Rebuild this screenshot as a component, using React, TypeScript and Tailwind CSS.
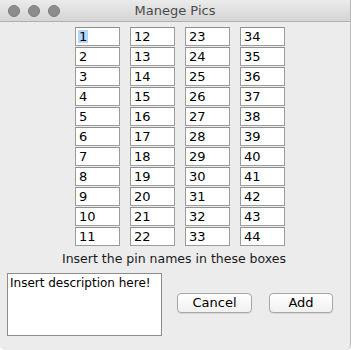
import React from 'react';

const font = { fontFamily: '"DejaVu Sans", "Liberation Sans", sans-serif' };

const PinField: React.FC<{ value: string; selected?: boolean }> = ({ value, selected }) => (
  <div className="h-[19px] w-[45px] bg-white border border-[#9b9b9b] border-t-[#8e8e8e] flex items-center pl-[2px] text-[13px] leading-none text-black">
    {selected ? <span className="bg-[#b3d7ff] px-[1px]">{value}</span> : <span className="px-[1px]">{value}</span>}
  </div>
);

const MacButton: React.FC<{ label: string; width: string }> = ({ label, width }) => (
  <button
    className={`${width} h-[20px] rounded-[4px] border border-[#a6a6a6] bg-gradient-to-b from-white to-[#f1f1f1] text-[13px] leading-none text-black shadow-[0_1px_0_rgba(0,0,0,0.08)] flex items-center justify-center`}
  >
    {label}
  </button>
);

export default function App() {
  const columns = [0, 1, 2, 3].map((c) => Array.from({ length: 11 }, (_, r) => String(c * 11 + r + 1)));

  return (
    <div className="w-[351px] h-[350px] bg-[#ececec] flex flex-col overflow-hidden border-r border-[#b8b8b8] rounded-b-[5px]" style={font}>
      {/* title bar */}
      <div className="h-[22px] relative flex items-center justify-center bg-gradient-to-b from-[#ebebeb] to-[#d5d5d5] border-b border-[#b1b1b1]">
        <div className="absolute left-[8px] top-[5px] flex gap-[8px]">
          <div className="w-[12px] h-[12px] rounded-full bg-[#8c8c8c] border border-[#7a7a7a]" />
          <div className="w-[12px] h-[12px] rounded-full bg-[#8c8c8c] border border-[#7a7a7a]" />
          <div className="w-[12px] h-[12px] rounded-full bg-[#8c8c8c] border border-[#7a7a7a]" />
        </div>
        <span className="text-[13px] text-[#4a4a4a]">Manege Pics</span>
      </div>

      {/* grid of pin names */}
      <div className="pt-[5px] pl-[75px] flex gap-[10px]">
        {columns.map((col, ci) => (
          <div key={ci} className="flex flex-col gap-[1px]">
            {col.map((v) => (
              <PinField key={v} value={v} selected={v === '1'} />
            ))}
          </div>
        ))}
      </div>

      <div className="mt-[4px] text-center text-[12.5px] text-[#1a1a1a] pr-[2px]">Insert the pin names in these boxes</div>

      {/* bottom row */}
      <div className="mt-[4px] pl-[7px] flex items-start">
        <div className="w-[155px] h-[63px] bg-white border border-[#8c8c8c] pl-[2px] pt-[1px] text-[12px] text-black leading-[16px] whitespace-nowrap overflow-hidden">
          Insert description here!
        </div>
        <div className="ml-[15px] mt-[20px] flex gap-[17px]">
          <MacButton label="Cancel" width="w-[75px]" />
          <MacButton label="Add" width="w-[64px]" />
        </div>
      </div>
    </div>
  );
}
